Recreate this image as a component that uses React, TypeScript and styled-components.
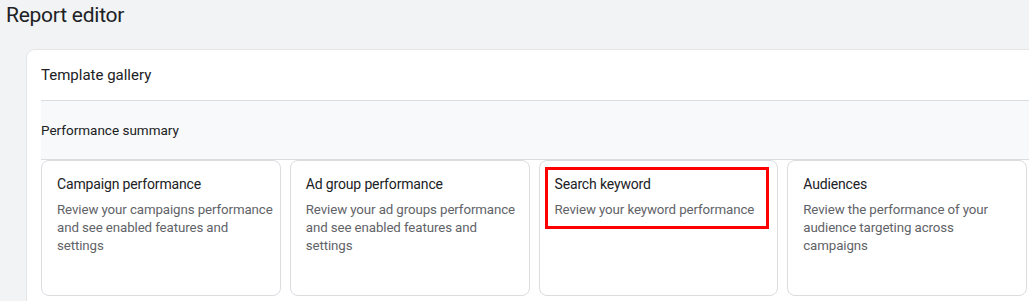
import React from "react";
import styled, { createGlobalStyle } from "styled-components";

const Global = createGlobalStyle`
  html, body { margin: 0; padding: 0; }
  body {
    background: #f1f3f4;
    font-family: Roboto, "Noto Sans", Arial, sans-serif;
    overflow: hidden;
    width: 1029px;
    height: 301px;
  }
`;

const Page = styled.div`
  display: flex;
  flex-direction: column;
  width: 1029px;
  height: 301px;
  overflow: hidden;
`;

const Title = styled.h1`
  margin: 0;
  padding-left: 6px;
  font-size: 21px;
  letter-spacing: -0.25px;
  line-height: 30px;
  font-weight: 400;
  color: #202124;
`;

const Panel = styled.section`
  margin: 20px 0 0 27px;
  width: 1100px;
  flex: 1;
  background: #fff;
  border-radius: 8px 8px 0 0;
  box-shadow: 0 0 0 1px #e4e5e7;
  padding: 0 0 0 14px;
  display: flex;
  flex-direction: column;
`;

const PanelHeader = styled.div`
  height: 50px;
  display: flex;
  align-items: center;
  font-size: 15px;
  color: #202124;
  border-bottom: 1px solid #dadce0;
`;

const SectionHeader = styled.div`
  height: 58px;
  display: flex;
  align-items: center;
  font-size: 13.5px;
  color: #202124;
  background: #f8f9fa;
  border-bottom: 1px solid #dadce0;
`;

const CardGrid = styled.div`
  display: grid;
  grid-template-columns: repeat(4, 239.75px);
  gap: 9px;
`;

const Card = styled.div`
  position: relative;
  height: 136px;
  box-sizing: border-box;
  border: 1px solid #dadce0;
  border-radius: 8px;
  padding: 13px 6px 0 15px;
  background: #fff;
`;

const CardTitle = styled.div`
  font-size: 14px;
  letter-spacing: -0.15px;
  line-height: 20px;
  color: #202124;
`;

const CardText = styled.div`
  margin-top: 7px;
  font-size: 13.3px;
  letter-spacing: -0.1px;
  line-height: 17.8px;
  color: #5f6368;
`;

const Highlight = styled.div`
  position: absolute;
  left: 5.5px;
  top: 6px;
  width: 224px;
  height: 62px;
  box-sizing: border-box;
  border: 3px solid #ff0000;
  pointer-events: none;
`;

const cards = [
  {
    title: "Campaign performance",
    text: "Review your campaigns performance and see enabled features and settings",
  },
  {
    title: "Ad group performance",
    text: "Review your ad groups performance and see enabled features and settings",
  },
  {
    title: "Search keyword",
    text: "Review your keyword performance",
    highlight: true,
  },
  {
    title: "Audiences",
    text: "Review the performance of your audience targeting across campaigns",
  },
];

export default function App() {
  return (
    <Page>
      <Global />
      <Title>Report editor</Title>
      <Panel>
        <PanelHeader>Template gallery</PanelHeader>
        <SectionHeader>Performance summary</SectionHeader>
        <CardGrid>
          {cards.map((c) => (
            <Card key={c.title}>
              {c.highlight && <Highlight />}
              <CardTitle>{c.title}</CardTitle>
              <CardText>{c.text}</CardText>
            </Card>
          ))}
        </CardGrid>
      </Panel>
    </Page>
  );
}
